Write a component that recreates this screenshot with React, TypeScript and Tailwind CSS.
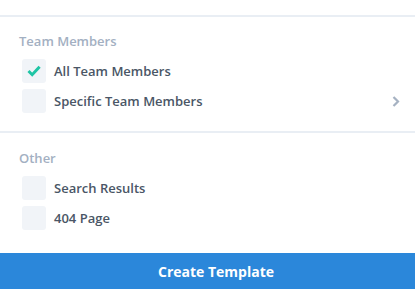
import React from "react";

function Box({ checked }: { checked?: boolean }) {
  return (
    <div className="w-6 h-6 rounded-[3px] bg-[#f1f4f8] flex items-center justify-center shrink-0">
      {checked && (
        <svg width="14" height="12" viewBox="0 0 14 12" fill="none">
          <path d="M1.5 6 L5.2 9.7 L12.6 1.8" stroke="#1fc5a5" strokeWidth="3" strokeLinecap="butt" strokeLinejoin="miter" />
        </svg>
      )}
    </div>
  );
}

function Row({ label, checked, chevron }: { label: string; checked?: boolean; chevron?: boolean }) {
  return (
    <div className="flex items-center h-6 pl-[22px] pr-[15px]">
      <Box checked={checked} />
      <span className="ml-2 text-[13px] font-semibold text-[#4a5666] leading-none">{label}</span>
      {chevron && (
        <svg className="ml-auto" width="8" height="11" viewBox="0 0 8 11" fill="none">
          <path d="M1.5 1 L6 5.5 L1.5 10" stroke="#a6b2c2" strokeWidth="2.2" />
        </svg>
      )}
    </div>
  );
}

export default function App() {
  return (
    <div className="w-[415px] h-[289px] bg-white flex flex-col overflow-hidden" style={{ fontFamily: '"Open Sans", sans-serif' }}>
      <div className="h-[15px] shrink-0" />
      <div className="h-[2px] bg-[#e9eef4] shrink-0" />
      <div className="pt-[15px] pb-[18px] flex flex-col">
        <div className="pl-[19px] text-[13px] font-semibold leading-[18px] text-[#a3b0c2]">Team Members</div>
        <div className="mt-[9px] flex flex-col gap-[6px]">
          <Row label="All Team Members" checked />
          <Row label="Specific Team Members" chevron />
        </div>
      </div>
      <div className="h-[2px] bg-[#e9eef4] shrink-0" />
      <div className="pt-[16px] flex flex-col">
        <div className="pl-[19px] text-[13px] font-semibold leading-[18px] text-[#a3b0c2]">Other</div>
        <div className="mt-[9px] flex flex-col gap-[6px]">
          <Row label="Search Results" />
          <Row label="404 Page" />
        </div>
      </div>
      <div className="mt-auto h-[36px] pl-[17px] bg-[#2b87da] flex items-center justify-center text-white font-bold text-[14px] shrink-0">
        Create Template
      </div>
    </div>
  );
}
